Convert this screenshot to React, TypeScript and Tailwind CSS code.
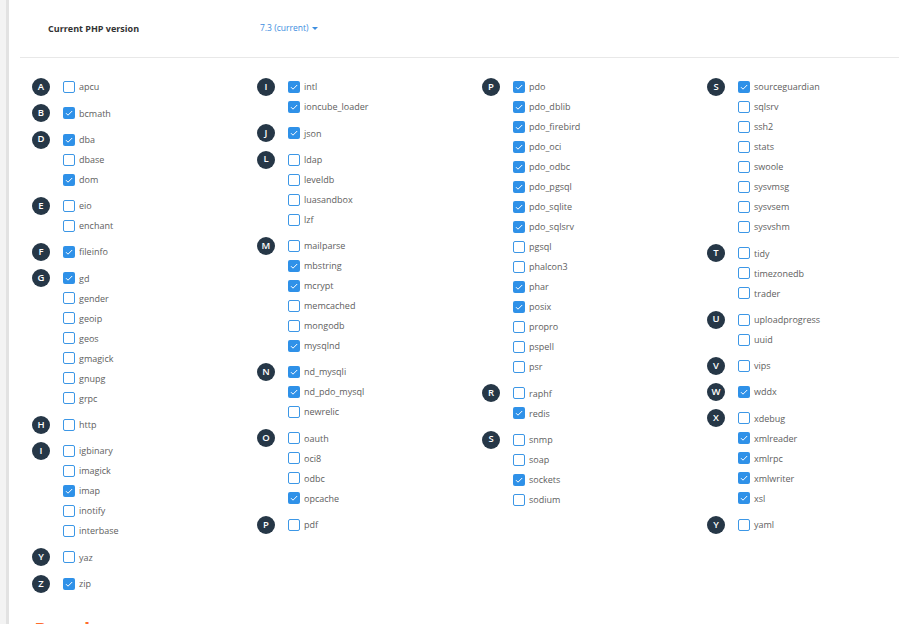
type Ext = [string, boolean];
type Group = { letter: string; items: Ext[] };

const columns: Group[][] = [
  [
    { letter: "A", items: [["apcu", false]] },
    { letter: "B", items: [["bcmath", true]] },
    { letter: "D", items: [["dba", true], ["dbase", false], ["dom", true]] },
    { letter: "E", items: [["eio", false], ["enchant", false]] },
    { letter: "F", items: [["fileinfo", true]] },
    {
      letter: "G",
      items: [["gd", true], ["gender", false], ["geoip", false], ["geos", false], ["gmagick", false], ["gnupg", false], ["grpc", false]],
    },
    { letter: "H", items: [["http", false]] },
    { letter: "I", items: [["igbinary", false], ["imagick", false], ["imap", true], ["inotify", false], ["interbase", false]] },
    { letter: "Y", items: [["yaz", false]] },
    { letter: "Z", items: [["zip", true]] },
  ],
  [
    { letter: "I", items: [["intl", true], ["ioncube_loader", true]] },
    { letter: "J", items: [["json", true]] },
    { letter: "L", items: [["ldap", false], ["leveldb", false], ["luasandbox", false], ["lzf", false]] },
    {
      letter: "M",
      items: [["mailparse", false], ["mbstring", true], ["mcrypt", true], ["memcached", false], ["mongodb", false], ["mysqlnd", true]],
    },
    { letter: "N", items: [["nd_mysqli", true], ["nd_pdo_mysql", true], ["newrelic", false]] },
    { letter: "O", items: [["oauth", false], ["oci8", false], ["odbc", false], ["opcache", true]] },
    { letter: "P", items: [["pdf", false]] },
  ],
  [
    {
      letter: "P",
      items: [
        ["pdo", true], ["pdo_dblib", true], ["pdo_firebird", true], ["pdo_oci", true], ["pdo_odbc", true],
        ["pdo_pgsql", true], ["pdo_sqlite", true], ["pdo_sqlsrv", true], ["pgsql", false], ["phalcon3", false],
        ["phar", true], ["posix", true], ["propro", false], ["pspell", false], ["psr", false],
      ],
    },
    { letter: "R", items: [["raphf", false], ["redis", true]] },
    { letter: "S", items: [["snmp", false], ["soap", false], ["sockets", true], ["sodium", false]] },
  ],
  [
    {
      letter: "S",
      items: [
        ["sourceguardian", true], ["sqlsrv", false], ["ssh2", false], ["stats", false],
        ["swoole", false], ["sysvmsg", false], ["sysvsem", false], ["sysvshm", false],
      ],
    },
    { letter: "T", items: [["tidy", false], ["timezonedb", false], ["trader", false]] },
    { letter: "U", items: [["uploadprogress", false], ["uuid", false]] },
    { letter: "V", items: [["vips", false]] },
    { letter: "W", items: [["wddx", true]] },
    { letter: "X", items: [["xdebug", false], ["xmlreader", true], ["xmlrpc", true], ["xmlwriter", true], ["xsl", true]] },
    { letter: "Y", items: [["yaml", false]] },
  ],
];

function Checkbox({ checked }: { checked: boolean }) {
  if (checked) {
    return (
      <span className="w-[12px] h-[12px] rounded-[2px] bg-[#2f91e8] flex items-center justify-center shrink-0">
        <svg width="10" height="10" viewBox="0 0 10 10">
          <polyline points="2,5.2 4,7.2 8.2,3" fill="none" stroke="#fff" strokeWidth="1" />
        </svg>
      </span>
    );
  }
  return <span className="w-[12px] h-[12px] rounded-[2px] border border-[#3c97e6] bg-white shrink-0" />;
}

function LetterGroup({ group }: { group: Group }) {
  return (
    <div className="flex mb-[6.3px]">
      <div className="w-[18px] h-[18px] mt-px rounded-full bg-[#263747] text-white text-[9.5px] font-semibold flex items-center justify-center shrink-0">
        {group.letter}
      </div>
      <div className="ml-[13px] flex flex-col">
        {group.items.map(([name, checked]) => (
          <label key={name} className="h-[20px] flex items-center gap-[4px] text-[9px] text-[#5e5e5e]">
            <Checkbox checked={checked} />
            <span>{name}</span>
          </label>
        ))}
      </div>
    </div>
  );
}

export default function App() {
  return (
    <div className="h-[624px] w-full overflow-hidden flex bg-white" style={{ fontFamily: '"Open Sans", sans-serif' }}>
      <div className="w-[9px] bg-[#f3f3f3] shrink-0 border-r-[3px] border-[#e2e2e2]" />
      <div className="flex-1 pl-[11px]">
        <div className="h-[58px] flex items-center border-b border-[#e8e8e8]">
          <div className="w-[240px] pl-[28px] text-[9px] font-bold text-[#333]">Current PHP version</div>
          <button className="flex items-center gap-[4px] text-[8.5px] text-[#3d8ee0]">
            7.3 (current)
            <svg width="6" height="4" viewBox="0 0 6 4">
              <polygon points="0,0 6,0 3,3" fill="#3d8ee0" />
            </svg>
          </button>
        </div>
        <div className="pt-[19px] pl-[12px] grid grid-cols-[225px_225px_225px_1fr]">
          {columns.map((col, i) => (
            <div key={i} className="flex flex-col">
              {col.map((g) => (
                <LetterGroup key={g.letter + i} group={g} />
              ))}
            </div>
          ))}
        </div>
        <div className="pl-[4px] mt-[20px] text-[20px] font-bold text-[#ff6c2c] leading-none">cPanel</div>
      </div>
    </div>
  );
}
